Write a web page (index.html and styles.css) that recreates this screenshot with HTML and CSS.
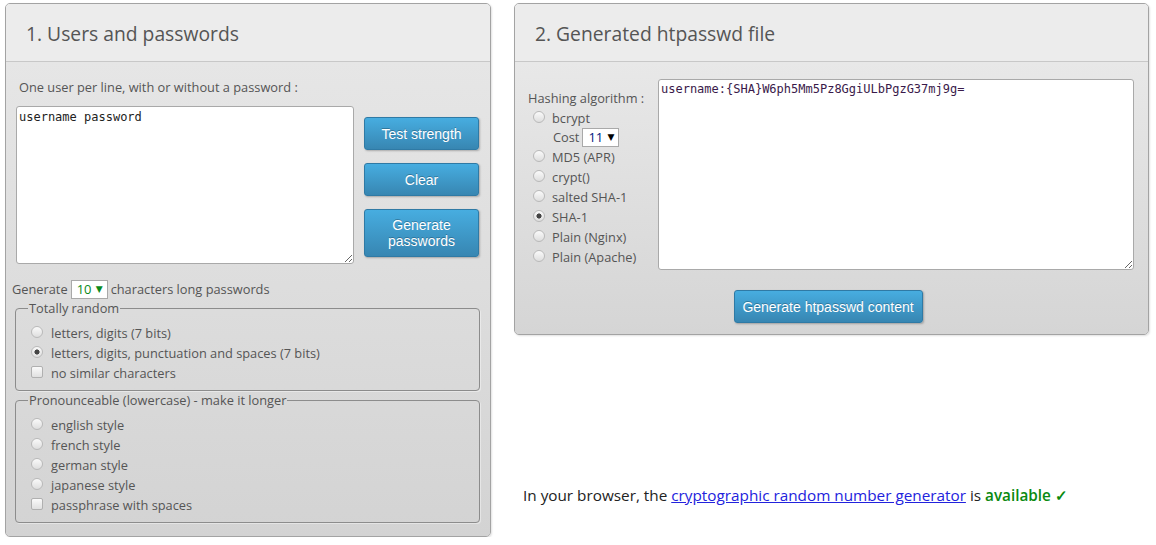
FILE: index.html
```html
<!DOCTYPE html>
<html>
<head>
<meta charset="utf-8">
<link rel="stylesheet" href="styles.css">
</head>
<body>
<div class="page">
  <div class="col-left">
    <div class="panel panel-left">
      <div class="panel-head"><h2>1. Users and passwords</h2></div>
      <div class="panel-body">
        <div class="intro">One user per line, with or without a password :</div>
        <div class="users-row">
          <textarea class="ta ta-users" spellcheck="false">username password</textarea>
          <div class="btn-col">
            <button class="btn">Test strength</button>
            <button class="btn">Clear</button>
            <button class="btn btn-tall">Generate<br>passwords</button>
          </div>
        </div>
        <div class="gen-row">
          Generate
          <span class="sel sel-green"><span class="sel-val">10</span><span class="caret">▼</span></span>
          characters long passwords
        </div>
        <fieldset class="fs">
          <legend>Totally random</legend>
          <label class="opt"><input type="radio" name="r"><span>letters, digits (7 bits)</span></label>
          <label class="opt"><input type="radio" name="r" checked><span>letters, digits, punctuation and spaces (7 bits)</span></label>
          <label class="opt"><input type="checkbox"><span>no similar characters</span></label>
        </fieldset>
        <fieldset class="fs">
          <legend>Pronounceable (lowercase) - make it longer</legend>
          <label class="opt"><input type="radio" name="r"><span>english style</span></label>
          <label class="opt"><input type="radio" name="r"><span>french style</span></label>
          <label class="opt"><input type="radio" name="r"><span>german style</span></label>
          <label class="opt"><input type="radio" name="r"><span>japanese style</span></label>
          <label class="opt"><input type="checkbox"><span>passphrase with spaces</span></label>
        </fieldset>
      </div>
    </div>
  </div>
  <div class="col-right">
    <div class="panel panel-right">
      <div class="panel-head"><h2>2. Generated htpasswd file</h2></div>
      <div class="panel-body body-right">
        <div class="hash-row">
          <div class="algos">
            <div class="algo-title">Hashing algorithm :</div>
            <label class="opt opt-r"><input type="radio" name="h"><span>bcrypt</span></label>
            <div class="cost">Cost <span class="sel sel-navy"><span class="sel-val">11</span><span class="caret">▼</span></span></div>
            <label class="opt opt-r"><input type="radio" name="h"><span>MD5 (APR)</span></label>
            <label class="opt opt-r"><input type="radio" name="h"><span>crypt()</span></label>
            <label class="opt opt-r"><input type="radio" name="h"><span>salted SHA-1</span></label>
            <label class="opt opt-r"><input type="radio" name="h" checked><span>SHA-1</span></label>
            <label class="opt opt-r"><input type="radio" name="h"><span>Plain (Nginx)</span></label>
            <label class="opt opt-r"><input type="radio" name="h"><span>Plain (Apache)</span></label>
          </div>
          <textarea class="ta ta-out" spellcheck="false">username:{SHA}W6ph5Mm5Pz8GgiULbPgzG37mj9g=</textarea>
        </div>
        <div class="gen-btn-row">
          <button class="btn btn-wide">Generate htpasswd content</button>
        </div>
      </div>
    </div>
    <p class="rng">In your browser, the <a href="#">cryptographic random number generator</a> is <span class="ok">available ✓</span></p>
  </div>
</div>
</body>
</html>
```

FILE: styles.css
```css
html, body {
  margin: 0;
  padding: 0;
  background: #fff;
}
body {
  font-family: "Open Sans", "Liberation Sans", sans-serif;
  color: #555;
  font-size: 12.8px;
}
.page {
  display: flex;
  gap: 23px;
  padding: 3px 7px 0 5px;
  align-items: flex-start;
}
.col-left {
  width: 486px;
  flex: none;
}
.col-right {
  flex: 1;
  display: flex;
  flex-direction: column;
}
.panel {
  border: 1px solid #a3a3a3;
  border-radius: 5px;
  background: linear-gradient(#eeeeee, #d4d4d4);
  box-shadow: 1px 1px 2px rgba(0,0,0,0.12);
  overflow: hidden;
}
.panel-head {
  height: 57px;
  border-bottom: 1px solid #c8c8c8;
  background: #ececec;
  display: flex;
  align-items: center;
  padding-left: 20px;
}
.panel-head h2 {
  margin: 0;
  font-weight: normal;
  font-size: 19.3px;
  color: #555;
  position: relative;
  top: 1px;
}
.panel-left .panel-body {
  background: linear-gradient(#e6e6e6, #d3d3d3);
  padding: 16px 10px 13px 6px;
}
.intro {
  margin-left: 7px;
  line-height: 18px;
  margin-bottom: 10px;
}
.users-row {
  display: flex;
  gap: 10px;
  margin-left: 4px;
}
.ta {
  border: 1px solid #a9a9a9;
  border-radius: 3px;
  background: #fff;
  font-family: "DejaVu Sans Mono", "Liberation Mono", monospace;
  font-size: 12px;
  color: #222;
  padding: 3px 2px;
  margin: 0;
  box-sizing: border-box;
  outline: none;
}
.ta-users {
  width: 338px;
  height: 158px;
  resize: both;
}
.btn-col {
  display: flex;
  flex-direction: column;
  gap: 13px;
  padding-top: 11px;
}
.btn {
  width: 115px;
  height: 33px;
  border: 1px solid #2f7aa5;
  border-radius: 3px;
  background: linear-gradient(#47ade0, #3786b2);
  color: #fff;
  font-family: "Liberation Sans", Arial, sans-serif;
  font-size: 14px;
  text-shadow: 0 -1px 0 rgba(0,0,0,0.25);
  box-shadow: 1px 1px 2px rgba(0,0,0,0.25);
  padding: 0;
  line-height: 16px;
  cursor: pointer;
}
.btn-tall {
  height: 48px;
}
.btn-wide {
  width: 189px;
}
.gen-row {
  margin-top: 16px;
  display: flex;
  align-items: center;
  gap: 3px;
  line-height: 19px;
}
.sel {
  display: inline-flex;
  align-items: center;
  justify-content: space-between;
  background: #fff;
  border: 1px solid #a9a9a9;
  box-sizing: border-box;
  height: 19px;
  width: 37px;
  padding: 0 4px 0 5px;
  font-size: 13px;
}
.sel .caret {
  font-size: 9px;
  font-family: "DejaVu Sans", sans-serif;
}
.sel-green { color: #0a8a1a; }
.sel-navy .sel-val { color: #001a80; }
.sel-navy .caret { color: #000; }
.fs {
  border: 1px solid #8c8c8c;
  border-radius: 4px;
  margin: 0 0 0 3px;
  padding: 6px 10px 7px 15px;
  box-shadow: 1px 1px 0 rgba(255,255,255,0.4);
}
.fs legend {
  padding: 0 1px;
  margin-left: -3px;
  line-height: 18px;
  color: #555;
}
.opt {
  display: flex;
  align-items: center;
  height: 20px;
  line-height: 20px;
  gap: 8px;
}
.opt input {
  margin: 0;
  flex: none;
}
input[type=radio] {
  appearance: none;
  -webkit-appearance: none;
  width: 12px;
  height: 12px;
  border-radius: 50%;
  border: 1px solid #b9b9b9;
  background: linear-gradient(#fafafa, #dedede);
  box-sizing: border-box;
  position: relative;
  top: -1px;
}
input[type=radio]:checked {
  background: radial-gradient(circle, #444 0, #444 2.3px, transparent 2.8px), linear-gradient(#fafafa, #dedede);
}
input[type=checkbox] {
  appearance: none;
  -webkit-appearance: none;
  width: 12px;
  height: 12px;
  border-radius: 2px;
  border: 1px solid #b0b0b0;
  background: linear-gradient(#fafafa, #e0e0e0);
  box-sizing: border-box;
  position: relative;
  top: -1px;
}
.body-right {
  background: linear-gradient(#e8e8e8, #d5d5d5);
  padding: 17px 14px 11px 13px;
}
.hash-row {
  display: flex;
  align-items: center;
  gap: 6px;
}
.algos {
  width: 124px;
  flex: none;
  padding-top: 5px;
  white-space: nowrap;
}
.algo-title {
  line-height: 20px;
}
.opt-r {
  margin-left: 5px;
  gap: 7px;
}
.cost {
  display: flex;
  align-items: center;
  gap: 3px;
  margin-left: 25px;
  height: 19px;
}
.ta-out {
  width: 476px;
  height: 191px;
  resize: both;
  padding: 2px 2px;
  color: #3a1a4a;
}
.gen-btn-row {
  display: flex;
  justify-content: center;
  margin-top: 20px;
  padding-right: 6px;
}
.rng {
  margin: 150px 0 0 9px;
  font-size: 15.3px;
  color: #222;
  line-height: 20px;
}
.rng a {
  color: #2222dd;
  text-decoration: underline;
}
.ok {
  color: #0a8a10;
  font-weight: 600;
}
```
